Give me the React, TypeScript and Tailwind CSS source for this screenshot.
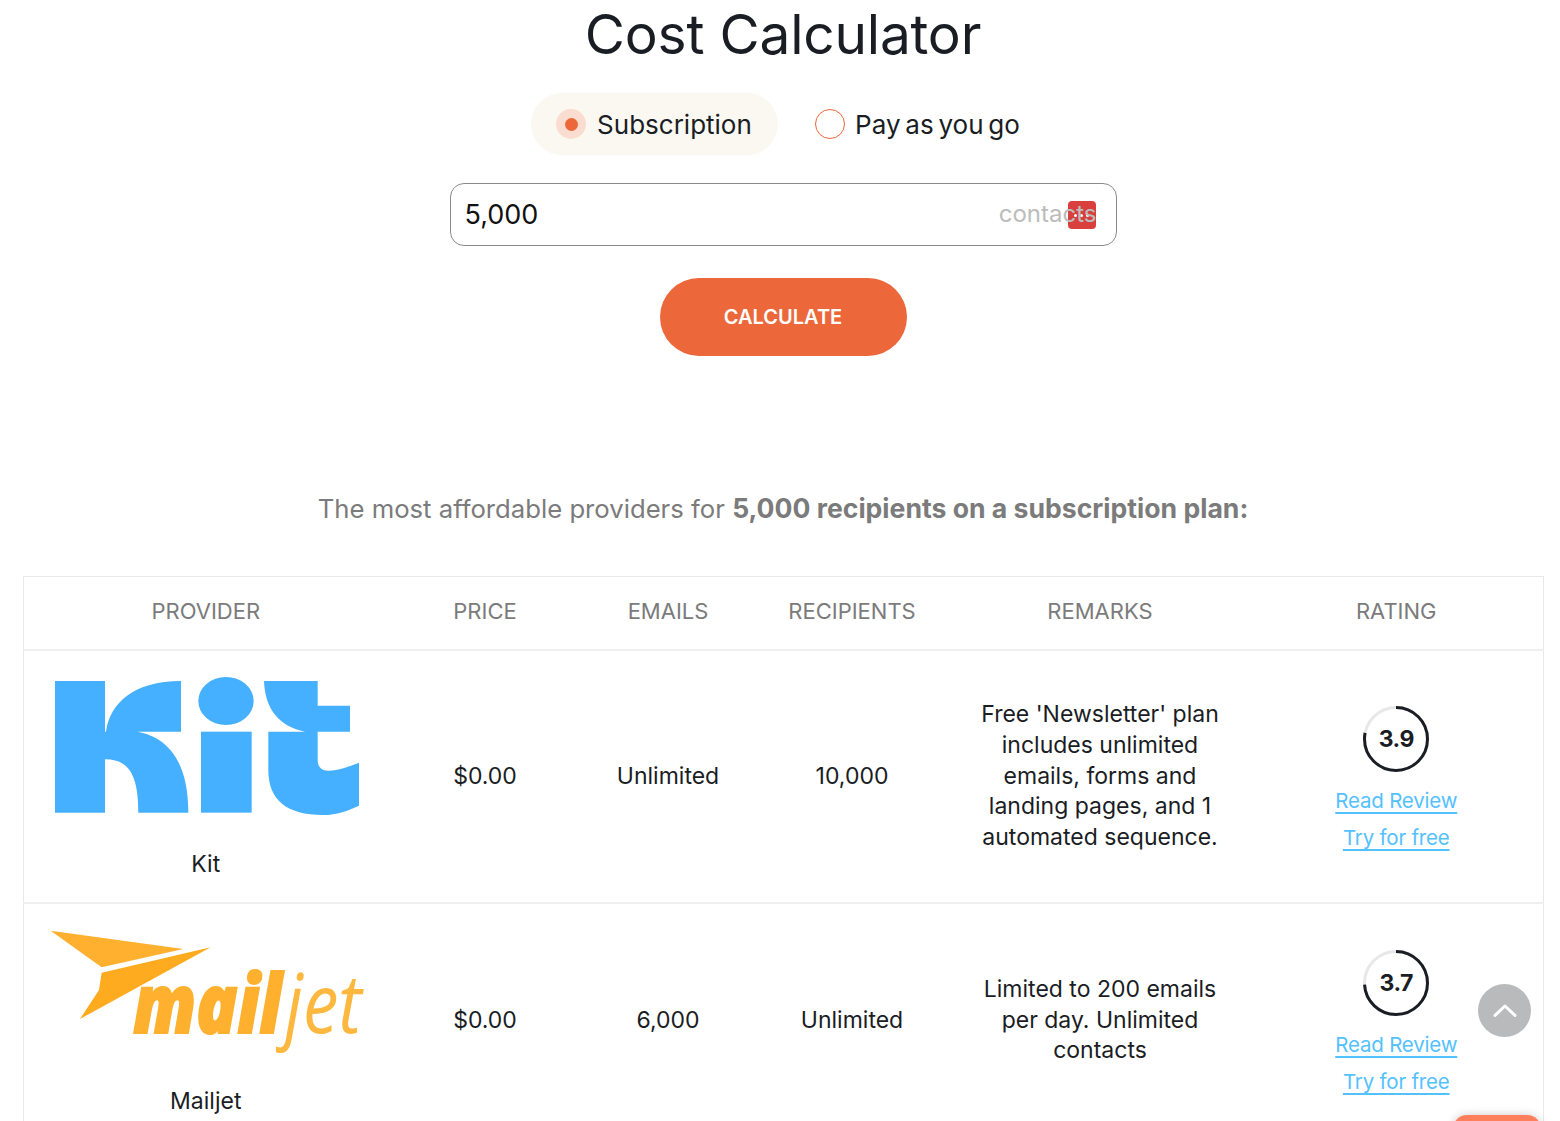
const FONT = "font-['Inter','Liberation_Sans',sans-serif]";

function Radio({ checked }: { checked?: boolean }) {
  if (checked) {
    return (
      <span className="flex h-[30px] w-[30px] items-center justify-center rounded-full bg-[#fbdcd0]">
        <span className="h-[13px] w-[13px] rounded-full bg-[#ec673a]" />
      </span>
    );
  }
  return <span className="h-[30px] w-[30px] rounded-full border border-[#ec673a] bg-white" />;
}

function KitLogo() {
  return (
    <svg viewBox="93 42 930 438" className="h-[146px] w-[310px]" fill="#45b0ff">
      <path d="M105 63H255V215H258C270 130 340 63 483 63V215H352C440 230 505 300 505 458H355C355 350 330 298 255 298V458H105Z" />
      <ellipse cx="618" cy="123" rx="83" ry="72" />
      <rect x="543" y="215" width="152" height="243" />
      <path d="M732 63H893V137H990V215H893V300C893 322 905 332 925 332C955 332 985 320 1017 308V437C985 452 950 465 910 465C800 465 745 420 745 330V215H855C780 200 735 150 732 63Z" />
    </svg>
  );
}

function MailjetLogo() {
  return (
    <svg viewBox="90 51 936 390" className="h-[130px] w-[312px] overflow-visible">
      <polygon points="92,62 490,117 245,172" fill="#ffb02e" />
      <polygon points="572,112 245,188 237,240 180,327" fill="#ffab20" />
      <text y="368" fontSize="245" fontStyle="italic" fontFamily="'Open Sans', sans-serif">
        <tspan
          x="340"
          textLength="445"
          lengthAdjust="spacingAndGlyphs"
          fontWeight="800"
          fill="#ffb02e"
          stroke="#ffb02e"
          strokeWidth="6"
        >
          mail
        </tspan>
        <tspan x="795" textLength="230" lengthAdjust="spacingAndGlyphs" fontWeight="400" fill="#ffb83f">
          jet
        </tspan>
      </text>
    </svg>
  );
}

function Rating({ value }: { value: number }) {
  const r = 31.5;
  const c = 2 * Math.PI * r;
  const dash = (value / 5) * c;
  return (
    <div className="flex flex-col items-center pt-[10px]">
      <div className="relative h-[66px] w-[66px]">
        <svg viewBox="0 0 66 66" className="h-[66px] w-[66px] -rotate-90">
          <circle cx="33" cy="33" r={r} fill="none" stroke="#e8e8e8" strokeWidth="3" />
          <circle
            cx="33"
            cy="33"
            r={r}
            fill="none"
            stroke="#1a1d24"
            strokeWidth="3"
            strokeDasharray={`${dash} ${c}`}
          />
        </svg>
        <span className="absolute inset-0 flex items-center justify-center text-[23px] font-bold tracking-[-0.5px] text-[#1a1d24]">
          {value.toFixed(1)}
        </span>
      </div>
      <a href="#" className="mt-[10px] text-[20.5px] leading-[37px] tracking-[-0.2px] text-[#54c1ff] underline underline-offset-[4px]">
        Read Review
      </a>
      <a href="#" className="text-[20.5px] leading-[37px] tracking-[-0.2px] text-[#54c1ff] underline underline-offset-[4px]">
        Try for free
      </a>
    </div>
  );
}

const headers = ["Provider", "Price", "Emails", "Recipients", "Remarks", "Rating"];

const rows = [
  {
    name: "Kit",
    logo: <KitLogo />,
    cell: "pb-[22px] pt-[23px]",
    price: "$0.00",
    emails: "Unlimited",
    recipients: "10,000",
    remarks: ["Free 'Newsletter' plan", "includes unlimited", "emails, forms and", "landing pages, and 1", "automated sequence."],
    rating: 3.9,
  },
  {
    name: "Mailjet",
    logo: <MailjetLogo />,
    cell: "pb-[20px] pt-[23px]",
    price: "$0.00",
    emails: "6,000",
    recipients: "Unlimited",
    remarks: ["Limited to 200 emails", "per day. Unlimited", "contacts"],
    rating: 3.7,
  },
];

export default function App() {
  return (
    <div className={`relative h-[1121px] w-full overflow-hidden bg-white text-[#1a1d24] ${FONT}`}>
      <div className="flex w-[1566px] flex-col items-center">
        <h1 className="h-[68px] text-[55px] font-normal leading-[68px] tracking-[-0.2px]">Cost Calculator</h1>

        <div className="mr-[15px] mt-[25px] flex h-[62px] items-center gap-[37px] text-[26px]">
          <label className="flex h-[62px] w-[247px] items-center gap-[11px] rounded-full bg-[#fbf8f2] pl-[25px]">
            <Radio checked />
            <span>Subscription</span>
          </label>
          <label className="flex items-center gap-[10px]">
            <Radio />
            <span className="[word-spacing:-2.5px]">Pay as you go</span>
          </label>
        </div>

        <div className="relative mt-[28px] flex h-[63px] w-[667px] items-center justify-between rounded-[14px] border-[1.5px] border-[#8a8a8a] pl-[14px] pr-[19px] text-[27px]">
          <span className="pt-[1px] text-[#111]">5,000</span>
          <span className="relative z-10 pb-[1px] text-[24px] text-[#bcbcbc]">contacts</span>
          <span className="absolute right-[20px] top-[17px] flex h-[28px] w-[28px] items-center justify-center gap-[3px] rounded-[4px] bg-[#d93f3c]">
            <span className="h-[3px] w-[3px] rounded-full bg-white" />
            <span className="h-[3px] w-[3px] rounded-full bg-white" />
            <span className="h-[3px] w-[3px] rounded-full bg-white" />
          </span>
        </div>

        <button className="mt-[32px] h-[78px] w-[247px] rounded-full bg-[#ec673a] text-[20px] font-semibold text-white">
          CALCULATE
        </button>

        <p className="mt-[135px] h-[34px] text-[25.7px] leading-[34px] text-[#7b7b7b]">
          The most affordable providers for <b className="text-[26.6px] font-bold">5,000 recipients on a subscription plan:</b>
        </p>

        <table className="mt-[51px] w-[1520px] table-fixed border-collapse border border-[#e8e8e8] text-center text-[23px]">
          <colgroup>
            <col className="w-[365px]" />
            <col className="w-[194px]" />
            <col className="w-[172px]" />
            <col className="w-[196px]" />
            <col className="w-[300px]" />
            <col className="w-[293px]" />
          </colgroup>
          <thead>
            <tr className="h-[73px] border-b-2 border-[#efefef]">
              {headers.map((h) => (
                <th key={h} className="pb-[2px] text-[22px] font-normal uppercase text-[#7b7b7b]">
                  {h}
                </th>
              ))}
            </tr>
          </thead>
          <tbody>
            {rows.map((r) => (
              <tr key={r.name} className="border-b-2 border-[#efefef]">
                <td className={r.cell}>
                  <div className="flex flex-col items-center">
                    {r.logo}
                    <span className="mt-[29px] leading-[31px]">{r.name}</span>
                  </div>
                </td>
                <td>{r.price}</td>
                <td>{r.emails}</td>
                <td>{r.recipients}</td>
                <td className="leading-[30.7px]">
                  {r.remarks.map((l) => (
                    <div key={l}>{l}</div>
                  ))}
                </td>
                <td>
                  <Rating value={r.rating} />
                </td>
              </tr>
            ))}
          </tbody>
        </table>
      </div>

      <button className="absolute left-[1478px] top-[984px] flex h-[53px] w-[53px] items-center justify-center rounded-full bg-[#b9babb]">
        <svg viewBox="0 0 24 24" className="h-[30px] w-[30px]" fill="none" stroke="#fff" strokeWidth="2.4" strokeLinecap="round" strokeLinejoin="round">
          <path d="M4 15.5l8-7.5 8 7.5" />
        </svg>
      </button>
      <div className="absolute left-[1453px] top-[1115px] h-[30px] w-[88px] rounded-t-[14px] bg-[#ff7f5c] shadow-[0_0_10px_rgba(0,0,0,0.2)]" />
    </div>
  );
}
